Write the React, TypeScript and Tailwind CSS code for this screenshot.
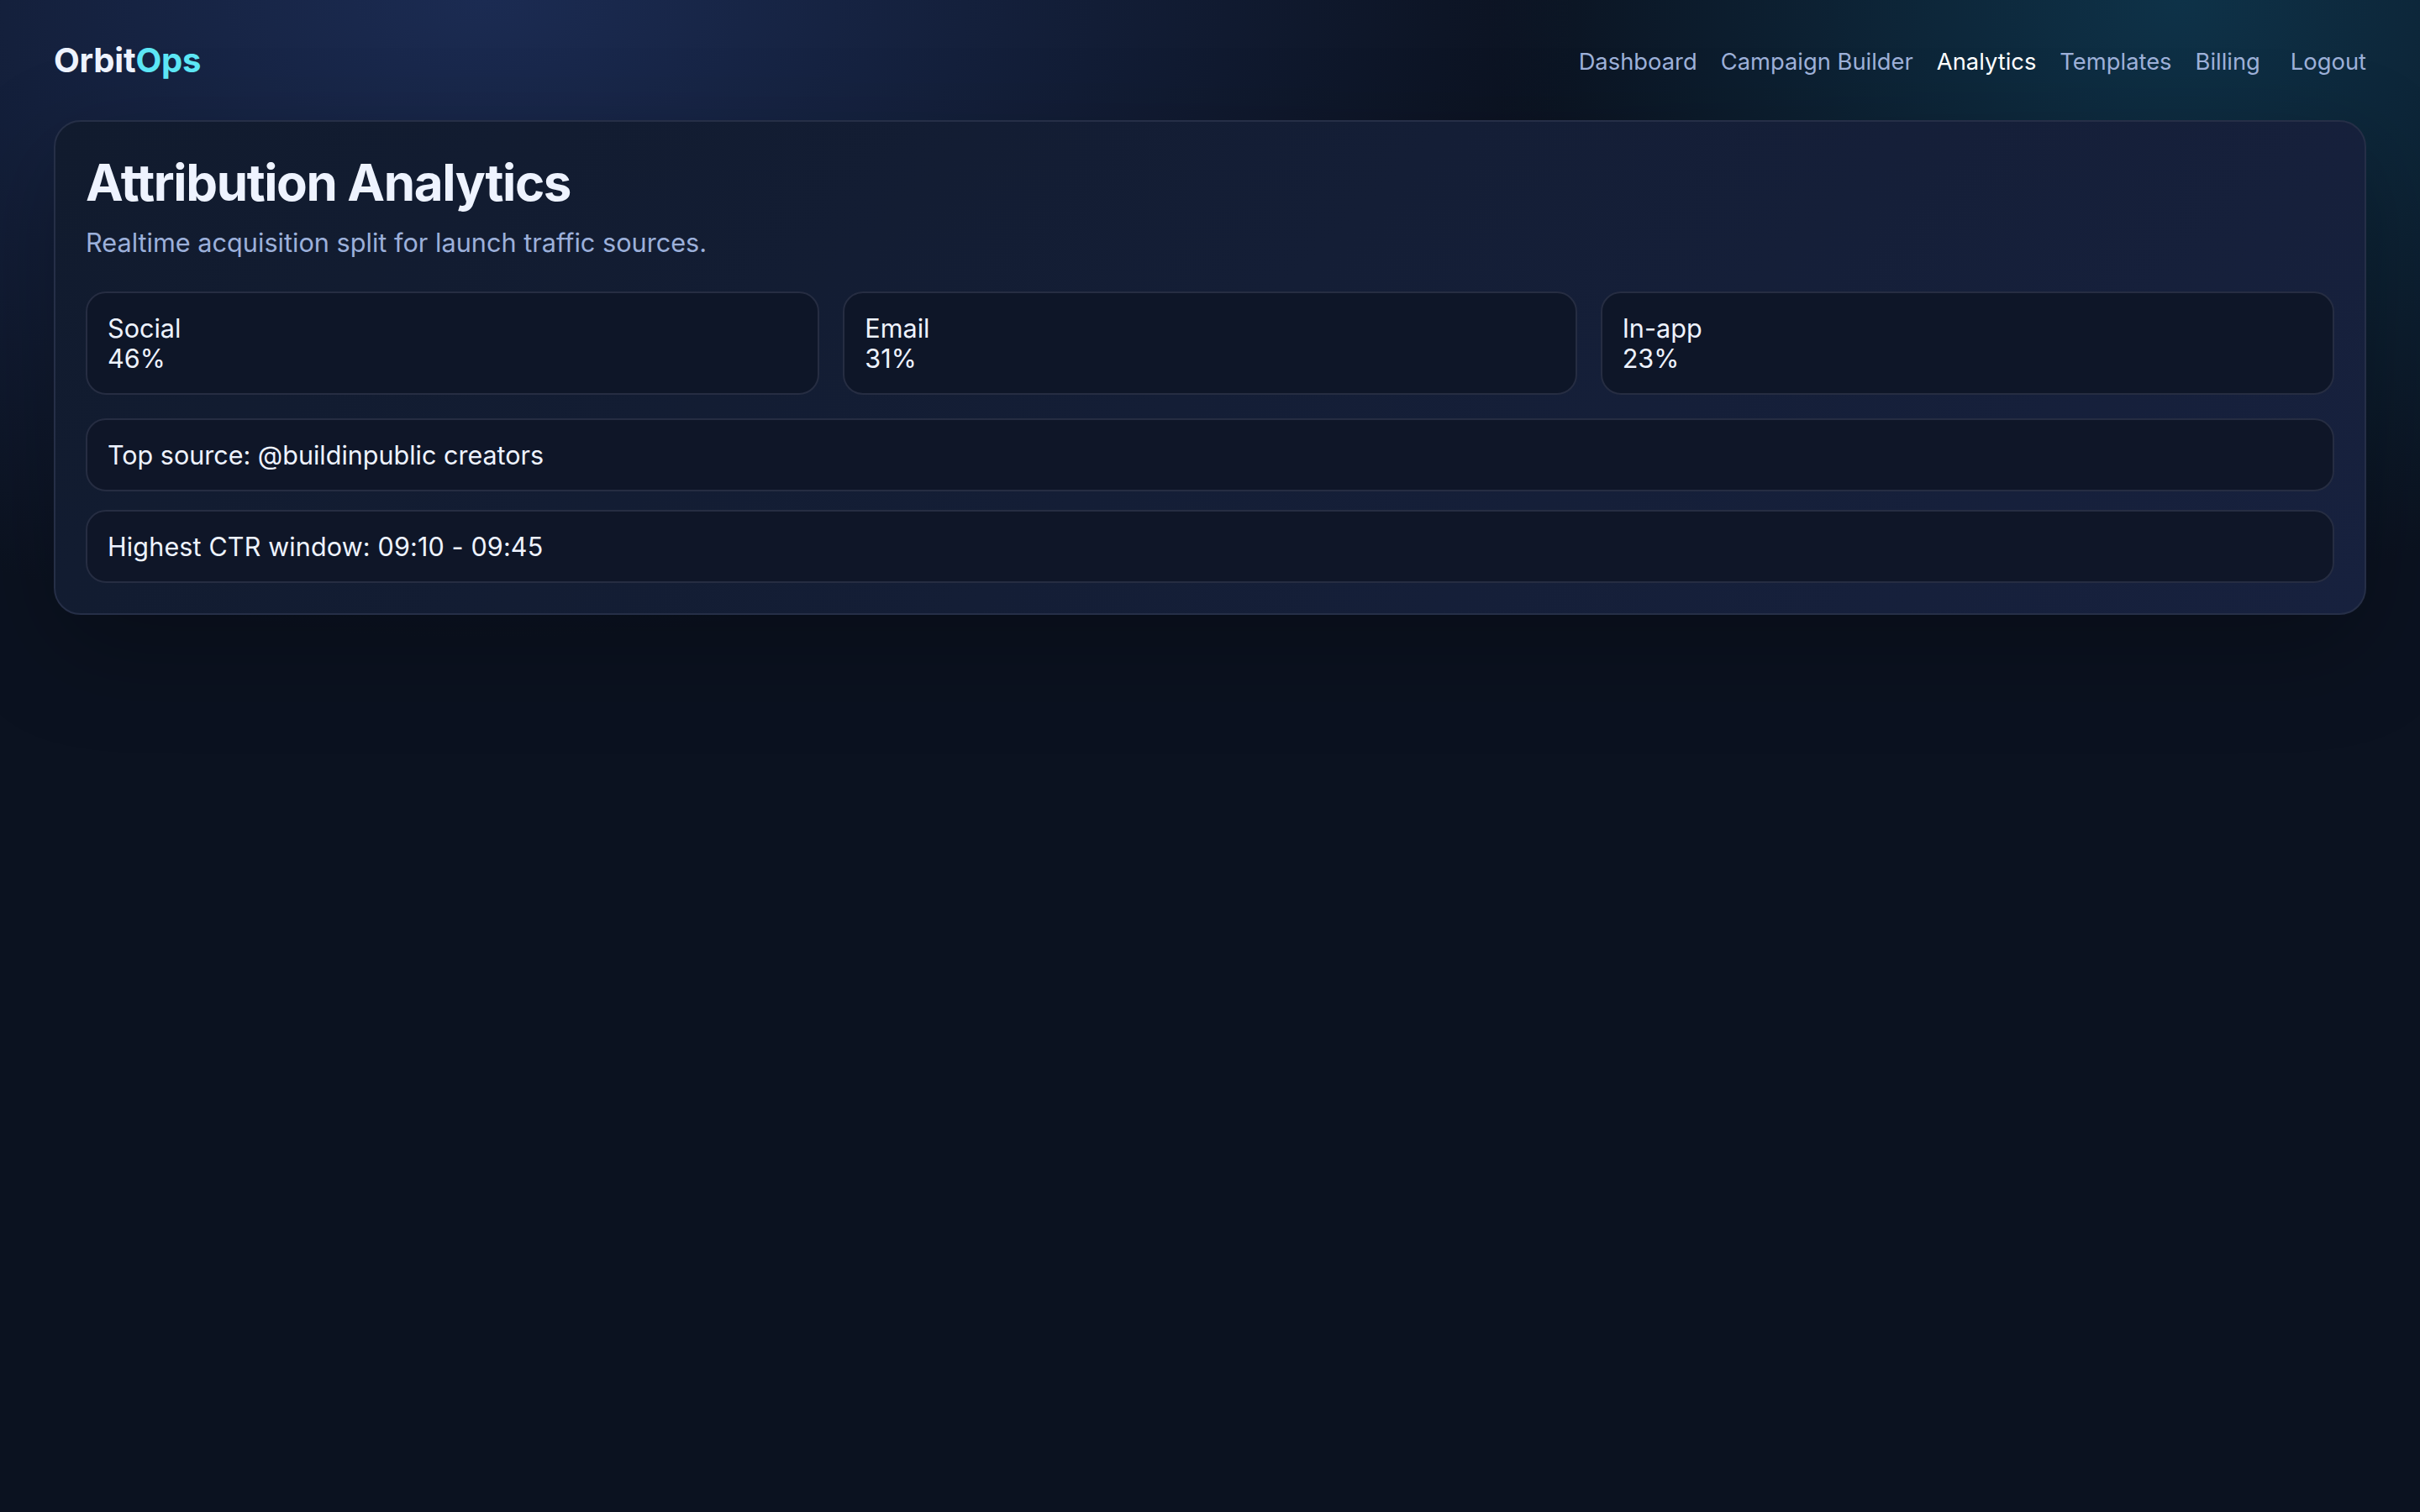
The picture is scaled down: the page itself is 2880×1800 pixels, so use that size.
export default function App() {
  const nav = ["Dashboard", "Campaign Builder", "Analytics", "Templates", "Billing"];
  const stats = [["Social", "46%"], ["Email", "31%"], ["In-app", "23%"]];
  const rows = ["Top source: @buildinpublic creators", "Highest CTR window: 09:10 - 09:45"];
  return (
    <div className="min-h-[1800px] bg-[#0b1220] bg-[radial-gradient(ellipse_1300px_760px_at_20%_0%,#1b2b52_0%,transparent_100%),radial-gradient(ellipse_820px_700px_at_90%_0%,#0e3248_0%,transparent_100%)] bg-no-repeat px-16 pt-[48px] font-['Inter',sans-serif] text-[#eef3ff] [font-variation-settings:'opsz'_15]">
      <header className="flex h-[48px] items-center justify-between">
        <div className="text-[40px] leading-[48px] font-bold tracking-[-0.2px]">
          Orbit<span className="text-[#5ce6f5]">Ops</span>
        </div>
        <nav className="flex items-center gap-7 pt-[4px] text-[27.35px] leading-[36px] text-[#9db0d8]">
          {nav.map((n) => (
            <a key={n} className={n === "Analytics" ? "text-white" : ""}>{n}</a>
          ))}
          <button className="ml-2 text-[#9db0d8]">Logout</button>
        </nav>
      </header>
      <main className="mt-[47px] rounded-[32px] border-2 border-[#262f47] bg-[linear-gradient(135deg,#111b2e,#17213e)] p-[36px] shadow-[0_40px_120px_rgba(0,0,0,0.25)]">
        <h1 className="text-[60px] leading-[72px] font-bold tracking-[-1.38px] text-[#eef3ff] [font-variation-settings:'opsz'_30]">Attribution Analytics</h1>
        <p className="mt-4 text-[30.67px] leading-[40px] text-[#9cb0da]">Realtime acquisition split for launch traffic sources.</p>
        <div className="mt-[38px] grid grid-cols-3 gap-7">
          {stats.map(([a, b]) => (
            <div key={a} className="rounded-[24px] border-2 border-[#262d42] bg-[#0e1628] px-6 py-[24px] text-[30.6px] leading-[35.5px]">
              <div>{a}</div>
              <div>{b}</div>
            </div>
          ))}
        </div>
        <div className="mt-7 rounded-[24px] border-2 border-[#262d42] bg-[#0f1628] px-6 py-[24px] text-[30.5px] leading-[35px]">
          {rows[0]}
        </div>
        <div className="mt-[22px] rounded-[24px] border-2 border-[#262d42] bg-[#0f1628] px-6 py-[24px] text-[30.5px] leading-[35px] tracking-[0.15px]">
          {rows[1]}
        </div>
      </main>
    </div>
  );
}
